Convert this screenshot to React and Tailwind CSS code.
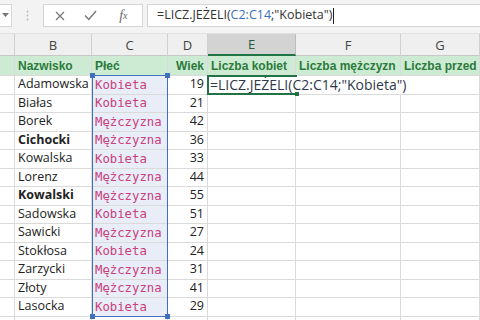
import React from "react";

const rows = [
  ["Adamowska", "Kobieta", 19],
  ["Białas", "Kobieta", 21],
  ["Borek", "Mężczyzna", 42],
  ["Cichocki", "Mężczyzna", 36, true],
  ["Kowalska", "Kobieta", 33],
  ["Lorenz", "Mężczyzna", 44],
  ["Kowalski", "Mężczyzna", 55, true],
  ["Sadowska", "Kobieta", 51],
  ["Sawicki", "Mężczyzna", 27],
  ["Stokłosa", "Kobieta", 24],
  ["Zarzycki", "Mężczyzna", 31],
  ["Złoty", "Mężczyzna", 41],
  ["Lasocka", "Kobieta", 29],
];

const cell = "border-r border-b border-[#dadada] box-border h-full";

function ColHeaders() {
  const cols = [
    ["", "w-[15px]"],
    ["B", "w-[77px]"],
    ["C", "w-[76px]"],
    ["D", "w-[40px]"],
    ["E", "w-[88px]", true],
    ["F", "w-[105px]"],
    ["G", "flex-1"],
  ];
  return (
    <div className="flex h-[22px] bg-[#efefef] text-[13px] text-[#444]">
      {cols.map(([l, w, sel], i) => (
        <div
          key={i}
          className={`${w} flex items-center justify-center pt-[2px] box-border border-r ${
            sel
              ? "bg-[#d3d3d3] border-[#bdbdbd] border-b-2 border-b-[#217346] text-[#215a3a]"
              : "border-[#d0d0d0] border-b border-b-[#c8c8c8]"
          }`}
        >
          {l}
        </div>
      ))}
    </div>
  );
}

export default function App() {
  return (
    <div
      className="w-[480px] h-[320px] overflow-hidden bg-white relative"
      style={{ fontFamily: "'Open Sans', 'Liberation Sans', sans-serif" }}
    >
      {/* formula bar */}
      <div className="h-[34px] bg-[#f3f3f3] border-b border-[#e0e0e0] box-border flex items-start pt-[4px]">
        <div className="w-[12px] h-[23px] bg-white border-r border-y border-[#d6d6d6] box-border flex items-center justify-center">
          <svg width="7" height="5" viewBox="0 0 7 5">
            <path d="M0 0 L7 0 L3.5 4 Z" fill="#777" />
          </svg>
        </div>
        <div className="w-[31px] h-[23px] flex items-center justify-center">
          <svg width="3" height="11" viewBox="0 0 3 11">
            <circle cx="1.5" cy="1.5" r="0.9" fill="#b5b5b5" />
            <circle cx="1.5" cy="5.5" r="0.9" fill="#b5b5b5" />
            <circle cx="1.5" cy="9.5" r="0.9" fill="#b5b5b5" />
          </svg>
        </div>
        <div className="w-[100px] h-[23px] bg-white border border-[#d6d6d6] box-border flex items-center">
          <div className="w-[32px] flex justify-center">
            <svg width="10" height="10" viewBox="0 0 10 10">
              <path d="M1 1 L9 9 M9 1 L1 9" stroke="#7a7a7a" strokeWidth="1.3" />
            </svg>
          </div>
          <div className="w-[30px] flex justify-center">
            <svg width="13" height="11" viewBox="0 0 13 11">
              <path d="M1 5.5 L4.8 9.5 L12 1" stroke="#7a7a7a" strokeWidth="1.5" fill="none" />
            </svg>
          </div>
          <div
            className="w-[38px] flex justify-center text-[#6a6a6a] italic text-[14px] leading-none"
            style={{ fontFamily: "'Liberation Serif', serif" }}
          >
            f<span className="text-[10px] relative top-[2px]">x</span>
          </div>
        </div>
        <div className="w-[4px]" />
        <div className="flex-1 h-[23px] bg-white border-y border-l border-[#d6d6d6] box-border flex items-center pl-[9px] text-[12.5px] text-[#333] whitespace-nowrap">
          <span>=LICZ.JEŻELI(</span>
          <span className="text-[#3d6fc0]">C2:C14</span>
          <span>;"Kobieta")</span>
          <span className="w-[1px] h-[16px] bg-[#222] ml-[1px]" />
        </div>
      </div>

      <ColHeaders />

      <div className="relative">
        {/* green header row */}
        <div
          className="flex h-[20px] bg-[#cdebd3] text-[12px] font-bold text-[#2b7a3b] whitespace-nowrap"
          style={{ fontFamily: "'Liberation Sans', Arial, sans-serif" }}
        >
          <div className={`w-[15px] ${cell} border-[#bfe0c6]`} />
          <div className={`w-[77px] ${cell} border-[#bfe0c6] flex items-center pl-[3px]`}>Nazwisko</div>
          <div className={`w-[76px] ${cell} border-[#bfe0c6] flex items-center pl-[3px]`}>Płeć</div>
          <div className={`w-[40px] ${cell} border-[#bfe0c6] flex items-center justify-end pr-[3px]`}>Wiek</div>
          <div className={`w-[88px] ${cell} border-[#bfe0c6] flex items-center pl-[3px]`}>Liczba kobiet</div>
          <div className={`w-[105px] ${cell} border-[#bfe0c6] flex items-center pl-[3px]`}>Liczba mężczyzn</div>
          <div className={`flex-1 ${cell} border-[#bfe0c6] flex items-center pl-[3px] overflow-hidden`}>Liczba przed 30</div>
        </div>

        {rows.map(([name, sex, age, bold], i) => (
          <div key={i} className="flex h-[18.5px] text-[12.5px] text-[#222]">
            <div className={`w-[15px] ${cell}`} />
            <div className={`w-[77px] ${cell} flex items-center pl-[3px] ${bold ? "font-bold" : ""}`}>{name}</div>
            <div
              className={`w-[76px] ${cell} bg-[#e8edf8] flex items-center pl-[3px] text-[12.3px] text-[#c8407c]`}
              style={{ fontFamily: "'DejaVu Sans Mono', monospace" }}
            >
              {sex}
            </div>
            <div className={`w-[40px] ${cell} flex items-center justify-end pr-[3px]`}>{age}</div>
            <div className={`w-[88px] ${cell} relative`}>
              {i === 0 && (
                <div className="absolute left-[2px] top-0 h-full flex items-center whitespace-nowrap text-[14px] text-[#2f3a4c] z-10 bg-white pr-[2px]">
                  =LICZ.JEŻELI(C2:C14;"Kobieta")
                </div>
              )}
            </div>
            <div className={`w-[105px] ${cell} ${i === 0 ? "border-r-0" : ""}`} />
            <div className={`flex-1 ${cell}`} />
          </div>
        ))}
        <div className="flex h-[18.5px]">
          <div className={`w-[15px] ${cell}`} />
          <div className={`w-[77px] ${cell}`} />
          <div className={`w-[76px] ${cell}`} />
          <div className={`w-[40px] ${cell}`} />
          <div className={`w-[88px] ${cell}`} />
          <div className={`w-[105px] ${cell}`} />
          <div className={`flex-1 ${cell}`} />
        </div>

        {/* selection C2:C14 */}
        <div className="absolute left-[92px] top-[19px] w-[76px] h-[241.5px] border border-[#3f6fbe] pointer-events-none box-border">
          <div className="absolute -left-[3px] -top-[3px] w-[5px] h-[5px] bg-[#3f6fbe]" />
          <div className="absolute -right-[3px] -top-[3px] w-[5px] h-[5px] bg-[#3f6fbe]" />
          <div className="absolute -left-[3px] -bottom-[3px] w-[5px] h-[5px] bg-[#3f6fbe]" />
          <div className="absolute -right-[3px] -bottom-[3px] w-[5px] h-[5px] bg-[#3f6fbe]" />
        </div>

        {/* active cell E2 */}
        <div className="absolute left-[207px] top-[19px] w-[90px] h-[20px] border-2 border-[#217346] box-border pointer-events-none z-20 border-r-0">
          <div className="absolute -right-[2px] -bottom-[3px] w-[4px] h-[4px] bg-[#217346]" />
        </div>
      </div>
    </div>
  );
}
